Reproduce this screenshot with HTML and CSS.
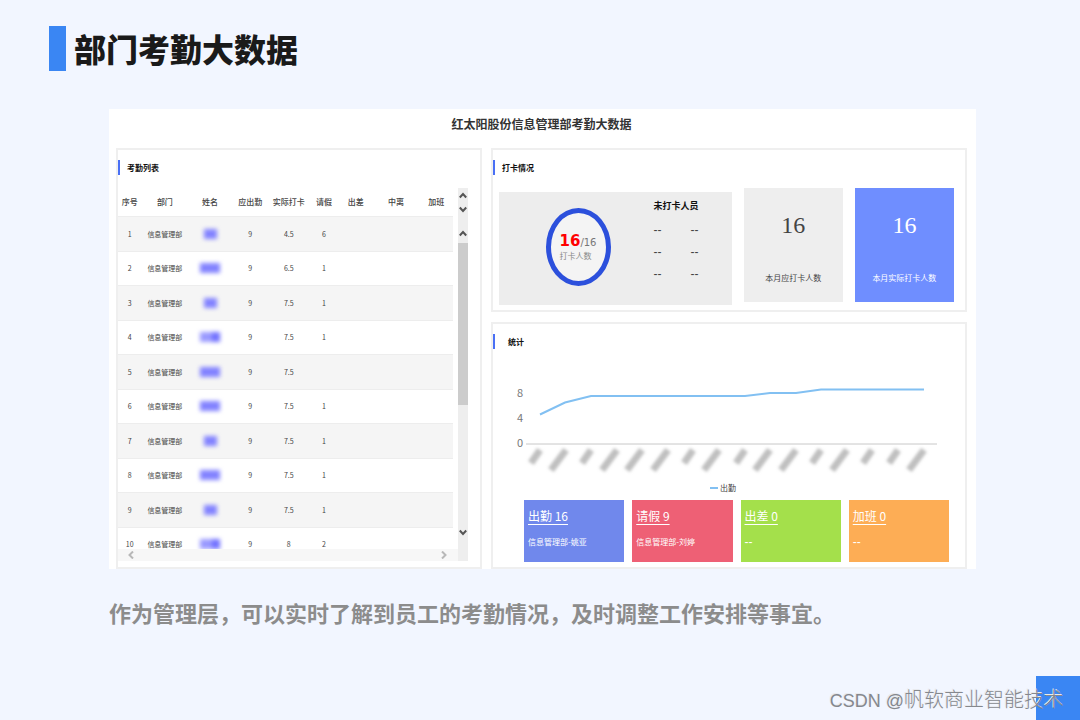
FILE: index.html
```
<!DOCTYPE html>
<html lang="zh-CN">
<head>
<meta charset="utf-8">
<meta name="viewport" content="width=device-width, initial-scale=1">
<title>部门考勤大数据</title>
<link rel="stylesheet" href="styles.css">
</head>
<body>
<header class="slide-head"><h1>部门考勤大数据</h1></header>
<main class="slide-body">
  <section class="board">
    <h2 class="board-title">红太阳股份信息管理部考勤大数据</h2>
    <div class="board-grid">
      <section class="panel list-panel">
        <h3 class="panel-title">考勤列表</h3>
        <div class="list">
          <div class="list-view">
            <div class="list-clip">
              <table class="att">
                <colgroup><col class="c-no"><col class="c-wide"><col class="c-name"><col class="c-due"><col class="c-real"><col class="c-leave"><col class="c-narrow"><col class="c-wide"><col class="c-narrow"></colgroup>
                <thead><tr><th>序号</th><th>部门</th><th>姓名</th><th>应出勤</th><th>实际打卡</th><th>请假</th><th>出差</th><th>中离</th><th>加班</th></tr></thead>
                <tbody>
                  <tr><td>1</td><td>信息管理部</td><td><span class="mask"></span></td><td>9</td><td>4.5</td><td>6</td><td></td><td></td><td></td></tr>
                  <tr><td>2</td><td>信息管理部</td><td><span class="mask long"></span></td><td>9</td><td>6.5</td><td>1</td><td></td><td></td><td></td></tr>
                  <tr><td>3</td><td>信息管理部</td><td><span class="mask"></span></td><td>9</td><td>7.5</td><td>1</td><td></td><td></td><td></td></tr>
                  <tr><td>4</td><td>信息管理部</td><td><span class="mask long step"></span></td><td>9</td><td>7.5</td><td>1</td><td></td><td></td><td></td></tr>
                  <tr><td>5</td><td>信息管理部</td><td><span class="mask long"></span></td><td>9</td><td>7.5</td><td></td><td></td><td></td><td></td></tr>
                  <tr><td>6</td><td>信息管理部</td><td><span class="mask long"></span></td><td>9</td><td>7.5</td><td>1</td><td></td><td></td><td></td></tr>
                  <tr><td>7</td><td>信息管理部</td><td><span class="mask"></span></td><td>9</td><td>7.5</td><td>1</td><td></td><td></td><td></td></tr>
                  <tr><td>8</td><td>信息管理部</td><td><span class="mask long"></span></td><td>9</td><td>7.5</td><td>1</td><td></td><td></td><td></td></tr>
                  <tr><td>9</td><td>信息管理部</td><td><span class="mask"></span></td><td>9</td><td>7.5</td><td>1</td><td></td><td></td><td></td></tr>
                  <tr><td>10</td><td>信息管理部</td><td><span class="mask long step"></span></td><td>9</td><td>8</td><td>2</td><td></td><td></td><td></td></tr>
                </tbody>
              </table>
            </div>
            <div class="hbar">
              <button type="button" aria-label="向左滚动"><svg width="6" height="8" viewBox="0 0 6 8"><path d="M5 0.5 1.5 4 5 7.5"/></svg></button>
              <button type="button" aria-label="向右滚动"><svg width="6" height="8" viewBox="0 0 6 8"><path d="M1 0.5 4.5 4 1 7.5"/></svg></button>
            </div>
          </div>
          <div class="vbar">
            <button type="button" aria-label="表头向上"><svg width="8" height="7" viewBox="0 0 8 7"><path d="M0.8 5.5 4 2 7.2 5.5"/></svg></button>
            <button type="button" aria-label="表头向下"><svg width="8" height="7" viewBox="0 0 8 7"><path d="M0.8 1.5 4 5 7.2 1.5"/></svg></button>
            <button type="button" class="body-up" aria-label="向上滚动"><svg width="8" height="7" viewBox="0 0 8 7"><path d="M0.8 5.5 4 2 7.2 5.5"/></svg></button>
            <div class="thumb"></div>
            <button type="button" class="body-down" aria-label="向下滚动"><svg width="8" height="7" viewBox="0 0 8 7"><path d="M0.8 1.5 4 5 7.2 1.5"/></svg></button>
          </div>
        </div>
      </section>
      <div class="side">
        <section class="panel">
          <h3 class="panel-title">打卡情况</h3>
          <div class="punch">
            <div class="summary">
              <div class="ring"><div><p class="count"><strong>16</strong>/16</p><p class="count-label">打卡人数</p></div></div>
              <div class="missing">
                <h4>未打卡人员</h4>
                <ul><li>--</li><li>--</li><li>--</li><li>--</li><li>--</li><li>--</li></ul>
              </div>
            </div>
            <div class="stat"><p class="stat-num">16</p><p class="stat-label">本月应打卡人数</p></div>
            <div class="stat active"><p class="stat-num">16</p><p class="stat-label">本月实际打卡人数</p></div>
          </div>
        </section>
        <section class="panel stats-panel">
          <h3 class="panel-title indent">统计</h3>
          <svg class="chart" viewBox="0 0 472 140" role="img" aria-label="出勤">
            <defs><filter id="soft" x="-30%" y="-30%" width="160%" height="160%"><feGaussianBlur stdDeviation="1.7"/></filter></defs>
            <g class="axis"><text x="30" y="41">8</text><text x="30" y="66">4</text><text x="30" y="91">0</text></g>
            <path class="base" d="M33 88H444"/>
            <path class="series" d="M47 58.500 72 46.500 98 40H252L277 37H303L328 33.500H431"/>
            <g class="names" filter="url(#soft)">
              <path d="M47 94 38 107"/><path d="M73 94 58 114"/><path d="M98 94 89 107"/><path d="M124 94 109 114"/><path d="M149 94 134 114"/><path d="M175 94 160 114"/><path d="M200 94 191 107"/><path d="M226 94 211 114"/><path d="M252 94 243 107"/><path d="M277 94 262 114"/><path d="M303 94 288 114"/><path d="M328 94 319 107"/><path d="M354 94 339 114"/><path d="M379 94 370 107"/><path d="M405 94 396 107"/><path d="M431 94 416 114"/>
            </g>
            <path class="series" d="M217 132H225"/>
            <text class="legend" x="227" y="135">出勤</text>
          </svg>
          <div class="tiles">
            <article class="tile blue"><a href="#">出勤 16</a><p>信息管理部-姚亚</p></article>
            <article class="tile red"><a href="#">请假 9</a><p>信息管理部-刘婷</p></article>
            <article class="tile green"><a href="#">出差 0</a><p class="dash">--</p></article>
            <article class="tile orange"><a href="#">加班 0</a><p class="dash">--</p></article>
          </div>
        </section>
      </div>
    </div>
  </section>
  <p class="caption">作为管理层，可以实时了解到员工的考勤情况，及时调整工作安排等事宜。</p>
</main>
<div class="corner"></div>
<p class="watermark"><span>CSDN @</span>帆软商业智能技术</p>
</body>
</html>
```
FILE: styles.css
```
* { box-sizing: border-box; }
h1, h2, h3, h4, p, ul { margin: 0; padding: 0; }
body {
  margin: 0;
  min-height: 100vh;
  position: relative;
  background: #f2f6ff;
  color: #444;
  font-family: "Noto Sans CJK SC", sans-serif;
}
.slide-head { padding: 26px 49px 0; }
.slide-head h1 {
  border-left: 17px solid #3a86f3;
  padding-left: 8px;
  font-size: 32px;
  line-height: 45px;
  font-weight: 900;
  color: #1a1a1a;
}
.slide-body { padding: 38px 104px 0 109px; }
.board { background: #fff; padding: 0 9px 0 7px; }
.board-title {
  padding: 5px 0 14px;
  font-size: 12px;
  line-height: 20px;
  font-weight: 700;
  color: #333;
  text-align: center;
}
.board-grid { display: grid; grid-template-columns: 366fr 476fr; gap: 9px; }
.panel { border: 2px solid #efefef; background: #fff; }
.panel-title {
  margin-top: 10px;
  padding-left: 7px;
  border-left: 2px solid #4a70f5;
  font-size: 8px;
  line-height: 15px;
  font-weight: 700;
  color: #111;
}
.panel-title.indent { padding-left: 13px; }

.list-panel { padding-right: 12px; }
.list { display: flex; gap: 5px; margin-top: 13px; height: 373px; }
.list-view { flex: 1; display: flex; flex-direction: column; min-width: 0; }
.list-clip { flex: 1; overflow: hidden; min-height: 0; }
.att { width: 100%; table-layout: fixed; border-collapse: collapse; font-size: 7px; line-height: 12px; }
.c-no { width: 7%; }
.c-wide { width: 14%; }
.c-name { width: 13%; }
.c-due { width: 11%; }
.c-real { width: 12%; }
.c-leave { width: 9%; }
.c-narrow { width: 10%; }
.att th { height: 28px; padding: 0; font-size: 8px; font-weight: 500; white-space: nowrap; }
.att td { height: 34px; padding: 0; text-align: center; border-top: 1px solid #ededed; white-space: nowrap; }
.att tbody tr:nth-child(odd) { background: #f5f5f5; }
.att tbody tr:nth-child(odd) td { height: 35px; }
.mask { display: block; width: 13px; height: 10px; margin: 0 auto; background: #8383ff; filter: blur(2px); }
.mask.long { width: 20px; }
.mask.step { background: linear-gradient(90deg, #9a9aff 60%, #7272ff 60%); }
.vbar { width: 10px; background: #eee; display: flex; flex-direction: column; }
button { border: 0; padding: 0; background: none; display: flex; align-items: center; justify-content: center; height: 14px; flex: none; }
button svg { fill: none; stroke: #555; stroke-width: 2; }
.body-up { margin-top: 10px; }
.thumb { height: 162px; background: #ccc; margin-top: 3px; }
.body-down { margin-top: auto; margin-bottom: 22px; }
.hbar { height: 12px; margin-right: -5px; padding: 0 11px 0 10px; background: #f7f7f7; display: flex; justify-content: space-between; }
.hbar button { height: 12px; }
.hbar svg { stroke: #b8b8b8; }

.side { display: flex; flex-direction: column; gap: 10px; }
.punch { display: grid; grid-template-columns: 232fr 99fr 99fr; align-items: start; column-gap: 12px; margin: 13px 11px 8px 6px; height: 114px; }
.summary { margin-top: 4px; background: #ededed; display: flex; height: 113px; padding-left: 20%; gap: 43px; }
.ring {
  width: 65px; height: 78px; flex: none; margin-top: 16px;
  border: 5px solid #2c50dc; border-radius: 50%; background: #f4f4f4;
  display: flex; align-items: center; justify-content: center;
}
.count { font-family: "DejaVu Sans", sans-serif; font-size: 10px; line-height: 16px; color: #777; white-space: nowrap; }
.count strong { font-size: 15px; color: #f00; }
.count-label { font-size: 8px; line-height: 10px; color: #888; }
.missing { padding-top: 8px; }
.missing h4 { font-size: 9px; line-height: 12px; color: #111; white-space: nowrap; }
.missing ul { list-style: none; display: grid; grid-template-columns: 37px 8px; margin-top: 7px; font-family: "Liberation Sans", sans-serif; font-size: 12px; line-height: 22px; }
.stat { height: 114px; background: #eee; text-align: center; color: #444; }
.stat-num { padding-top: 23px; font-family: "Liberation Serif", serif; font-size: 24px; line-height: 28px; }
.stat-label { margin-top: 33px; font-size: 8px; line-height: 12px; white-space: nowrap; }
.stat.active { background: #6f8eff; color: #fff; }

.stats-panel { flex: 1; }
.chart { display: block; width: 100%; height: auto; margin-top: 7px; }
.axis text { font-family: "Noto Sans CJK SC", sans-serif; font-size: 11px; fill: #777; text-anchor: end; }
.legend { font-size: 8px; fill: #444; }
.base { stroke: #c8c8c8; fill: none; }
.series { stroke: #82c0f2; stroke-width: 2; fill: none; }
.names path { stroke: #c0c0c0; stroke-width: 7; }
.tiles { display: grid; grid-template-columns: repeat(4, 1fr); gap: 8px; padding: 4px 16px 5px 31px; }
.tile { height: 62px; padding: 6px 4px; color: #fff; }
.tile a { display: block; font-size: 12px; line-height: 20px; color: inherit; text-underline-offset: 3px; }
.tile p { margin-top: 10px; font-size: 8px; line-height: 12px; white-space: nowrap; }
.tile .dash { font-family: "Liberation Sans", sans-serif; font-size: 12px; }
.blue { background: #7088ec; }
.red { background: #ee6075; }
.green { background: #a4e04b; }
.orange { background: #fdad55; }

.caption { margin-top: 26px; font-size: 22px; line-height: 34px; font-weight: 700; color: #8c8c8c; }
.corner { position: absolute; right: 0; bottom: 0; width: 44px; height: 44px; background: #3a86f3; }
.watermark {
  position: absolute; right: 16px; bottom: 4px;
  font-size: 20px; line-height: 30px; font-weight: 300;
  color: #85888e; text-shadow: -1px -1px 0 #e8eaee; white-space: nowrap;
}
.watermark span { font-family: "Liberation Sans", sans-serif; font-size: 18px; }
```
